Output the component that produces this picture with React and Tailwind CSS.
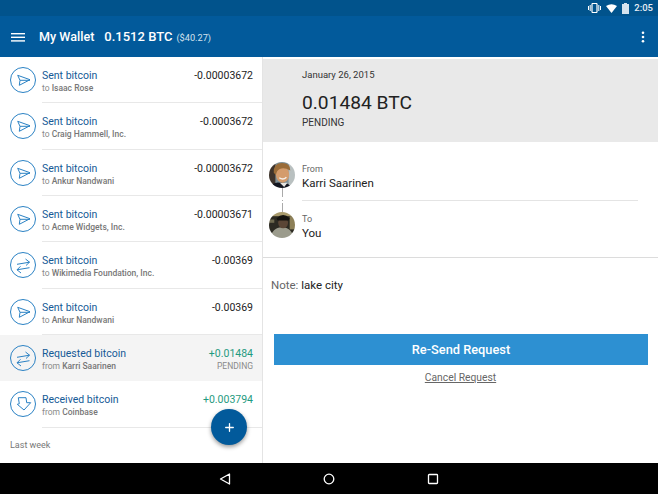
import React from 'react';
import { Plus } from 'lucide-react';

const font = "font-['Roboto','Liberation_Sans',sans-serif]";

const rows = [
  { icon: 'sent', title: 'Sent bitcoin', prep: 'to', name: 'Isaac Rose', amount: '-0.00003672' },
  { icon: 'sent', title: 'Sent bitcoin', prep: 'to', name: 'Craig Hammell, Inc.', amount: '-0.0003672' },
  { icon: 'sent', title: 'Sent bitcoin', prep: 'to', name: 'Ankur Nandwani', amount: '-0.00003672' },
  { icon: 'sent', title: 'Sent bitcoin', prep: 'to', name: 'Acme Widgets, Inc.', amount: '-0.00003671' },
  { icon: 'swap', title: 'Sent bitcoin', prep: 'to', name: 'Wikimedia Foundation, Inc.', amount: '-0.00369' },
  { icon: 'sent', title: 'Sent bitcoin', prep: 'to', name: 'Ankur Nandwani', amount: '-0.00369' },
  { icon: 'swap', title: 'Requested bitcoin', prep: 'from', name: 'Karri Saarinen', amount: '+0.01484', status: 'PENDING', active: true },
  { icon: 'recv', title: 'Received bitcoin', prep: 'from', name: 'Coinbase', amount: '+0.003794' },
];

// Circle icons used on the transaction rows
function TxIcon({ type }) {
  return (
    <svg width="27" height="27" viewBox="0 0 27 27" fill="none" stroke="#2b82c4" strokeWidth="1" className="shrink-0">
      <circle cx="13" cy="13" r="12.5" />
      {type === 'sent' && (
        <path d="M7.7 8.3 L20 12.7 L9.3 18.3 L10 13.3 Z M10 13.3 H20" strokeLinejoin="round" />
      )}
      {type === 'swap' && (
        <path d="M7 12.3 L19.5 10.2 M15.5 7 L19.5 10.2 L16 13.5 M19.5 15.7 L7 17.8 M10.5 14.3 L7 17.8 L11 21" strokeLinejoin="round" />
      )}
      {type === 'recv' && (
        <path d="M8.3 6.7 H16 L16.7 11.7 H20.7 L14 19 L7.3 13.3 L9.3 12.7 Z" strokeLinejoin="round" />
      )}
    </svg>
  );
}

function TxRow({ row }) {
  return (
    <div className={`h-[46.33px] flex pl-[10px] ${row.active ? 'bg-[#f4f4f4]' : ''}`}>
      <div className="pt-[10px] mr-[5px]">
        <TxIcon type={row.icon} />
      </div>
      <div className={`flex-1 flex justify-between pr-[9px] pt-[12px] ${row.active ? '' : 'border-b border-[#e8e8e8]'}`}>
        <div>
          <div className="text-[10.5px] leading-[14px] text-[#155a96]">{row.title}</div>
          <div className="text-[8.5px] leading-[11px] text-[#8a8a8a]">
            {row.prep} <span className="font-medium text-[#777777]">{row.name}</span>
          </div>
        </div>
        <div className="text-right">
          <div className={`text-[10.5px] leading-[14px] ${row.amount[0] === '+' ? 'text-[#1f9a80]' : 'text-[#222222]'}`}>{row.amount}</div>
          {row.status && <div className="text-[8.5px] leading-[11px] text-[#8a8a8a]">{row.status}</div>}
        </div>
      </div>
    </div>
  );
}

function StatusIcons() {
  return (
    <div className="flex items-center gap-[5px] text-white">
      <svg width="13" height="10" viewBox="0 0 13 10" fill="none">
        <rect x="4" y="0.5" width="5" height="9" rx="0.8" stroke="white" strokeWidth="1.2" />
        <path d="M0.5 3 V7 M2.2 2 V8 M10.8 2 V8 M12.5 3 V7" stroke="white" strokeWidth="1" />
      </svg>
      <svg width="11" height="9" viewBox="0 0 11 9"><path d="M0 2 Q5.5 -1.5 11 2 L5.5 9 Z" fill="white" /></svg>
      <svg width="7" height="11" viewBox="0 0 7 11"><path d="M2 0 H5 V1 H7 V11 H0 V1 H2 Z" fill="#d5e3ee" /></svg>
      <span className="text-[9.5px] font-medium leading-none text-[#e6eef5]">2:05</span>
    </div>
  );
}

// Portrait thumbnails, roughly painted and softened to read as small photos
function AvatarFrom() {
  return (
    <div className="w-[26px] h-[26px] shrink-0 rounded-full overflow-hidden">
      <svg width="26" height="26" viewBox="0 0 26 26" className="blur-[0.5px] scale-110">
        <rect width="26" height="26" fill="#7d8f96" />
        <rect x="19" width="7" height="26" fill="#b9c0c0" />
        <rect width="7" height="26" fill="#3d332b" />
        <path d="M1 26 Q4 19 11 20 Q19 19 23 26 Z" fill="#12151f" />
        <path d="M11 20 L15 24 L18 20 Z" fill="#e4e4e0" />
        <ellipse cx="13.5" cy="12.5" rx="6" ry="7.5" fill="#d49c6c" />
        <path d="M5.5 11 Q5 2 13 2 Q21 2 20.5 9 Q15 5.5 11 7.5 Q8 9 7.5 13 Z" fill="#9a6c38" />
        <path d="M10.5 15.5 Q14 18 17 15" stroke="#f5efe8" strokeWidth="1.3" fill="none" />
      </svg>
    </div>
  );
}

function AvatarTo() {
  return (
    <div className="w-[26px] h-[26px] shrink-0 rounded-full overflow-hidden">
      <svg width="26" height="26" viewBox="0 0 26 26" className="blur-[0.5px] scale-110">
        <rect width="26" height="26" fill="#2c2a22" />
        <rect width="26" height="5" fill="#a89a6c" />
        <rect x="20" y="5" width="6" height="12" fill="#8d8058" />
        <rect y="8" width="6" height="3" fill="#6f6a50" />
        <path d="M2 26 Q4 15 13 15 Q22 15 24 26 Z" fill="#9b9b8c" />
        <ellipse cx="14" cy="11" rx="4.5" ry="5" fill="#5b4636" />
        <path d="M8 7 Q14 1 20 7 L19 9 H9 Z" fill="#14130f" />
      </svg>
    </div>
  );
}

export default function App() {
  return (
    <div className={`w-[658px] h-[494px] flex flex-col overflow-hidden bg-white ${font}`}>
      {/* Status bar */}
      <div className="h-[16px] bg-[#01538c] flex items-center justify-end pr-[5px]">
        <StatusIcons />
      </div>

      {/* App bar */}
      <div className="h-[41px] bg-[#025a9b] flex items-center pt-[1px] pl-[11px] pr-[13px] text-white">
        <svg width="14" height="9" viewBox="0 0 14 9" fill="white" className="mr-[14px]">
          <rect y="0" width="14" height="1.4" />
          <rect y="3.6" width="14" height="1.4" />
          <rect y="7.2" width="14" height="1.4" />
        </svg>
        <span className="text-[12.6px] font-medium">My Wallet</span>
        <span className="text-[13px] font-medium ml-[10px]">0.1512 BTC</span>
        <span className="text-[9.2px] ml-[4px] mt-[1px] text-[#d5e3ee]">($40.27)</span>
        <svg width="4" height="12" viewBox="0 0 4 12" fill="white" className="ml-auto">
          <circle cx="2" cy="1.8" r="1.3" />
          <circle cx="2" cy="6" r="1.3" />
          <circle cx="2" cy="10.2" r="1.3" />
        </svg>
      </div>

      <div className="flex-1 flex min-h-0">
        {/* Transaction list */}
        <div className="relative w-[263px] shrink-0 border-r border-[#e4e4e4]">
          {rows.map((row, i) => (
            <TxRow key={i} row={row} />
          ))}
          <div className="pl-[10px] pt-[11px] text-[9px] leading-[12px] text-[#777777]">Last week</div>
          <button className="absolute right-[15px] top-[352px] w-[36px] h-[36px] rounded-full bg-[#025a9b] shadow-[0_2px_4px_rgba(0,0,0,0.4)] flex items-center justify-center">
            <Plus size={13} color="white" strokeWidth={2.4} />
          </button>
        </div>

        {/* Detail pane */}
        <div className="flex-1 flex flex-col">
          <div className="h-[83px] bg-[#e9e9e9] pl-[39px] pt-[9px] mt-[2px]">
            <div className="text-[9.5px] leading-[13px] text-[#333333]">January 26, 2015</div>
            <div className="text-[19.2px] leading-[24px] mt-[10px] text-[#222222]">0.01484 BTC</div>
            <div className="text-[10px] leading-[12px] mt-[2px] text-[#333333]">PENDING</div>
          </div>

          <div className="h-[116px] border-b border-[#dcdcdc] pl-[6px] pt-[20px] flex">
            <div className="flex flex-col items-center w-[26px] mr-[7px]">
              <AvatarFrom />
              <div className="h-[24px] flex flex-col items-center justify-between">
                <div className="h-[9px] w-px bg-[#aaaaaa]" />
                <div className="h-px w-px bg-[#aaaaaa]" />
                <div className="h-[9px] w-px bg-[#aaaaaa]" />
              </div>
              <AvatarTo />
            </div>
            <div className="flex-1 pr-[20px]">
              <div className="h-[39px] border-b border-[#e4e4e4]">
                <div className="text-[9px] leading-[11px] pt-[1.5px] box-content text-[#666666]">From</div>
                <div className="text-[11.5px] leading-[14px] mt-[1.5px] text-[#222222]">Karri Saarinen</div>
              </div>
              <div className="pt-[13px]">
                <div className="text-[9px] leading-[11px] text-[#666666]">To</div>
                <div className="text-[11.5px] leading-[14px] mt-[1px] text-[#222222]">You</div>
              </div>
            </div>
          </div>

          <div className="pl-[8px] mt-[20px] text-[11.5px] leading-[14px] text-[#222222]">
            <span className="text-[#666666]">Note:</span> lake city
          </div>

          <div className="mt-[42px] ml-[11px] mr-[10px] h-[31px] bg-[#2d90d2] flex items-center justify-center text-white text-[12.8px] font-medium">
            Re-Send Request
          </div>
          <div className="mt-[6px] text-center text-[10.3px] leading-[14px] text-[#666666] underline">Cancel Request</div>
        </div>
      </div>

      {/* Nav bar */}
      <div className="h-[31px] bg-black flex items-center pl-[219px] gap-[92px]">
        <svg width="12" height="12" viewBox="0 0 12 12" fill="none" stroke="white" strokeWidth="1.3">
          <path d="M10.5 1 V11 L1.5 6 Z" strokeLinejoin="round" />
        </svg>
        <svg width="12" height="12" viewBox="0 0 12 12" fill="none" stroke="white" strokeWidth="1.3">
          <circle cx="6" cy="6" r="4.8" />
        </svg>
        <svg width="12" height="12" viewBox="0 0 12 12" fill="none" stroke="white" strokeWidth="1.3">
          <rect x="1.5" y="1.5" width="9" height="9" rx="0.8" />
        </svg>
      </div>
    </div>
  );
}
